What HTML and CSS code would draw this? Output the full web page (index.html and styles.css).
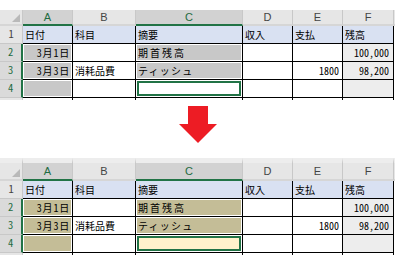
FILE: index.html
```html
<!DOCTYPE html>
<html lang="ja">
<head>
<meta charset="utf-8">
<title>Excel</title>
<link rel="stylesheet" href="styles.css">
</head>
<body>
<div class="page">
  <div class="sheet sheet--top">
    <div class="ch corner"><span class="tri"></span></div>
    <div class="ch sel">A</div><div class="ch">B</div><div class="ch sel">C</div><div class="ch">D</div><div class="ch">E</div><div class="ch">F</div><div class="ch last"></div>

    <div class="rh">1</div>
    <div class="c blue">日付</div><div class="c blue">科目</div><div class="c blue">摘要</div><div class="c blue">収入</div><div class="c blue">支払</div><div class="c blue">残高</div><div class="g"></div>

    <div class="rh sel">2</div>
    <div class="c hl r num d">3月1日</div><div class="c"></div><div class="c hl w2">期首残高</div><div class="c"></div><div class="c"></div><div class="c grey r num f">100,000</div><div class="g"></div>

    <div class="rh sel">3</div>
    <div class="c hl r num d">3月3日</div><div class="c">消耗品費</div><div class="c hl w1">ティッシュ</div><div class="c"></div><div class="c r num">1800</div><div class="c grey r num f">98,200</div><div class="g"></div>

    <div class="rh sel">4</div>
    <div class="c hl"></div><div class="c"></div><div class="c cur"></div><div class="c"></div><div class="c"></div><div class="c grey"></div><div class="g"></div>

    <div class="rh end"></div>
    <div class="c end"></div><div class="c end"></div><div class="c end"></div><div class="c end"></div><div class="c end"></div><div class="c end"></div><div class="g"></div>
  </div>

  <div class="arrow-zone">
    <svg class="arrow" width="38" height="37" viewBox="0 0 38 37" aria-hidden="true">
      <polygon points="9,0 29,0 29,18 38,18 19,37 0,18 9,18" fill="#ed1c24"/>
    </svg>
  </div>

  <div class="sheet sheet--bottom">
    <div class="ch corner"><span class="tri"></span></div>
    <div class="ch sel">A</div><div class="ch">B</div><div class="ch sel">C</div><div class="ch">D</div><div class="ch">E</div><div class="ch">F</div><div class="ch last"></div>

    <div class="rh">1</div>
    <div class="c blue">日付</div><div class="c blue">科目</div><div class="c blue">摘要</div><div class="c blue">収入</div><div class="c blue">支払</div><div class="c blue">残高</div><div class="g"></div>

    <div class="rh sel">2</div>
    <div class="c hl r num d">3月1日</div><div class="c"></div><div class="c hl w2">期首残高</div><div class="c"></div><div class="c"></div><div class="c grey r num f">100,000</div><div class="g"></div>

    <div class="rh sel">3</div>
    <div class="c hl r num d">3月3日</div><div class="c">消耗品費</div><div class="c hl w1">ティッシュ</div><div class="c"></div><div class="c r num">1800</div><div class="c grey r num f">98,200</div><div class="g"></div>

    <div class="rh sel">4</div>
    <div class="c hl"></div><div class="c"></div><div class="c cur"></div><div class="c"></div><div class="c"></div><div class="c grey"></div><div class="g"></div>

    <div class="rh end"></div>
    <div class="c end"></div><div class="c end"></div><div class="c end"></div><div class="c end"></div><div class="c end"></div><div class="c end"></div><div class="g"></div>
  </div>
</div>
</body>
</html>
```

FILE: styles.css
```css
html, body {
  margin: 0;
  padding: 0;
  background: #ffffff;
}

body {
  font-family: "Noto Sans CJK JP", "Noto Sans", sans-serif;
  color: #000;
  overflow: hidden;
}

.page {
  width: 395px;
  display: flex;
  flex-direction: column;
}

.sheet {
  display: grid;
  grid-template-columns: 23px 50px 63px 107px 50px 50px 51px 1fr;
}

.sheet--top {
  padding-top: 10px;
  grid-template-rows: 16px repeat(4, 18px) 2px;
}

.sheet--bottom {
  grid-template-rows: 23px repeat(4, 18px) 2px;
}

/* column headers */
.ch {
  box-sizing: border-box;
  background: #e6e6e6;
  border-right: 1px solid #c8c8c8;
  border-bottom: 2px solid #d6d6d6;
  display: flex;
  align-items: center;
  justify-content: center;
  font-family: "Liberation Sans", "DejaVu Sans", sans-serif;
  font-size: 11px;
  color: #444;
  line-height: 1;
}

.sheet--bottom .ch {
  border-top: 5px solid #ededed;
}

.ch.sel {
  background: #d2d2d2;
  color: #1e6b41;
  border-bottom-color: #217346;
}

.ch.last {
  border-right: none;
}

.corner {
  justify-content: flex-end;
  align-items: flex-end;
  padding: 0 2px 2px 0;
}

.tri {
  width: 0;
  height: 0;
  border-left: 8px solid transparent;
  border-bottom: 8px solid #b9b9b9;
}

/* row headers */
.rh {
  box-sizing: border-box;
  background: #e6e6e6;
  border-right: 1px solid #c8c8c8;
  border-bottom: 1px solid #c8c8c8;
  display: flex;
  align-items: center;
  justify-content: center;
  font-size: 10.5px;
  font-feature-settings: "hwid";
  color: #444;
  line-height: 1;
}

.rh.sel {
  background: #dadada;
  color: #1e6b41;
  border-right: 2px solid #217346;
}

.rh.end {
  border-bottom: none;
}

/* data cells */
.c {
  box-sizing: border-box;
  border-right: 1px solid #000;
  border-bottom: 1px solid #000;
  display: flex;
  align-items: center;
  padding: 0 2px;
  font-size: 10px;
  line-height: 1;
  white-space: nowrap;
  overflow: hidden;
  background: #fff;
}

.c.end {
  border-bottom: none;
}

.c.r {
  justify-content: flex-end;
  padding-right: 3px;
}

.c.f {
  padding-right: 4px;
}

.c.num {
  font-feature-settings: "hwid";
}

.c.d {
  letter-spacing: 0.8px;
  padding-right: 2px;
}

.c.w2 {
  letter-spacing: 2px;
}

.c.w1 {
  letter-spacing: 1.2px;
}

.c.blue {
  background: #d9e1f2;
}

.c.grey {
  background: #ededed;
}

.sheet--top .c.hl {
  background: #c8c8c8;
  box-shadow: inset 0 0 0 1px #fff;
}

.sheet--bottom .c.hl {
  background: #c4bd97;
  box-shadow: inset 0 0 0 1px #fff;
}

.c.cur {
  box-shadow: inset 0 0 0 1px #fff, inset 0 0 0 3px #217346;
}

.sheet--bottom .c.cur {
  background: #fff2cc;
}

.g {
  background: #fff;
}

/* arrow */
.arrow-zone {
  box-sizing: border-box;
  height: 58px;
  padding-top: 6px;
  display: flex;
  justify-content: center;
  align-items: flex-start;
}

.arrow {
  display: block;
}
```
